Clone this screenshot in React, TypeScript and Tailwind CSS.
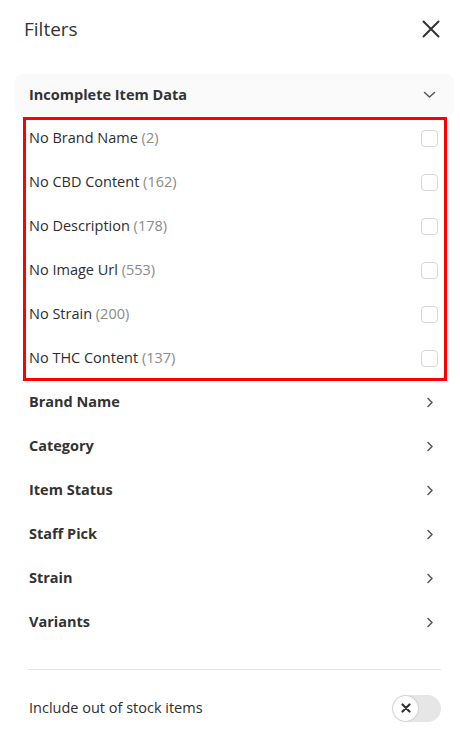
import React from "react";

const items = [
  ["No Brand Name", "(2)"],
  ["No CBD Content", "(162)"],
  ["No Description", "(178)"],
  ["No Image Url", "(553)"],
  ["No Strain", "(200)"],
  ["No THC Content", "(137)"],
];

const sections = ["Brand Name", "Category", "Item Status", "Staff Pick", "Strain", "Variants"];

function ChevronRight() {
  return (
    <svg width="8" height="11" viewBox="0 0 8 11" fill="none">
      <path d="M2 1.5 L6 5.5 L2 9.5" stroke="#555" strokeWidth="1.5" strokeLinecap="round" strokeLinejoin="round" />
    </svg>
  );
}

function ChevronDown() {
  return (
    <svg width="13" height="8" viewBox="0 0 13 8" fill="none">
      <path d="M1.5 1.5 L6.5 6 L11.5 1.5" stroke="#555" strokeWidth="1.5" strokeLinecap="round" strokeLinejoin="round" />
    </svg>
  );
}

export default function App() {
  return (
    <div
      className="w-[460px] h-[735px] bg-white overflow-hidden text-[#2e2e2e]"
      style={{ fontFamily: '"Open Sans", "Noto Sans", sans-serif' }}
    >
      <div className="h-[58px] flex items-center justify-between pl-[24px] pr-[20px]">
        <div className="text-[19px] leading-none text-[#333]">Filters</div>
        <svg width="18" height="18" viewBox="0 0 18 18" fill="none">
          <path d="M1.5 1.5 L16.5 16.5 M16.5 1.5 L1.5 16.5" stroke="#333" strokeWidth="2" strokeLinecap="round" />
        </svg>
      </div>

      <div className="mt-[16px] mx-[15px] w-[439px]">
        <div className="h-[42px] rounded-lg bg-[#fafafa] flex items-center justify-between pl-[14px] pr-[18px]">
          <span className="text-[14.5px] leading-none font-bold text-[#333]">Incomplete Item Data</span>
          <ChevronDown />
        </div>

        <div className="relative">
          {items.map(([label, count]) => (
            <div key={label} className="h-[44px] flex items-center justify-between pl-[14px] pr-[16px]">
              <span className="text-[14.5px] leading-none text-[#2e2e2e]">
                {label} <span className="text-[#8a8a8a]">{count}</span>
              </span>
              <span className="w-[17px] h-[17px] rounded-[4px] border border-[#d6d6dc] bg-white" />
            </div>
          ))}
          <div className="absolute left-[8px] right-[7px] top-[1px] bottom-[-1px] border-[3px] border-[#ff0000] pointer-events-none" />
        </div>

        {sections.map((s) => (
          <div key={s} className="h-[44px] flex items-center justify-between pl-[14px] pr-[20px]">
            <span className="text-[14.5px] leading-none font-bold text-[#333]">{s}</span>
            <ChevronRight />
          </div>
        ))}
      </div>

      <div className="mt-[25px] ml-[28px] mr-[19px] h-px bg-[#e6e6e6]" />

      <div className="mt-[16px] h-[44px] flex items-center justify-between pl-[29px] pr-[19px]">
        <span className="text-[14.5px] leading-none text-[#2e2e2e]">Include out of stock items</span>
        <div className="w-[49px] h-[27px] rounded-full bg-[#e6e6e6] flex items-center px-[1px]">
          <div className="w-[25px] h-[25px] rounded-full bg-white shadow-[0_0_2px_rgba(0,0,0,0.25)] flex items-center justify-center">
            <svg width="10" height="10" viewBox="0 0 10 10" fill="none">
              <path d="M1.5 1.5 L8.5 8.5 M8.5 1.5 L1.5 8.5" stroke="#333" strokeWidth="2.2" strokeLinecap="round" />
            </svg>
          </div>
        </div>
      </div>
    </div>
  );
}
